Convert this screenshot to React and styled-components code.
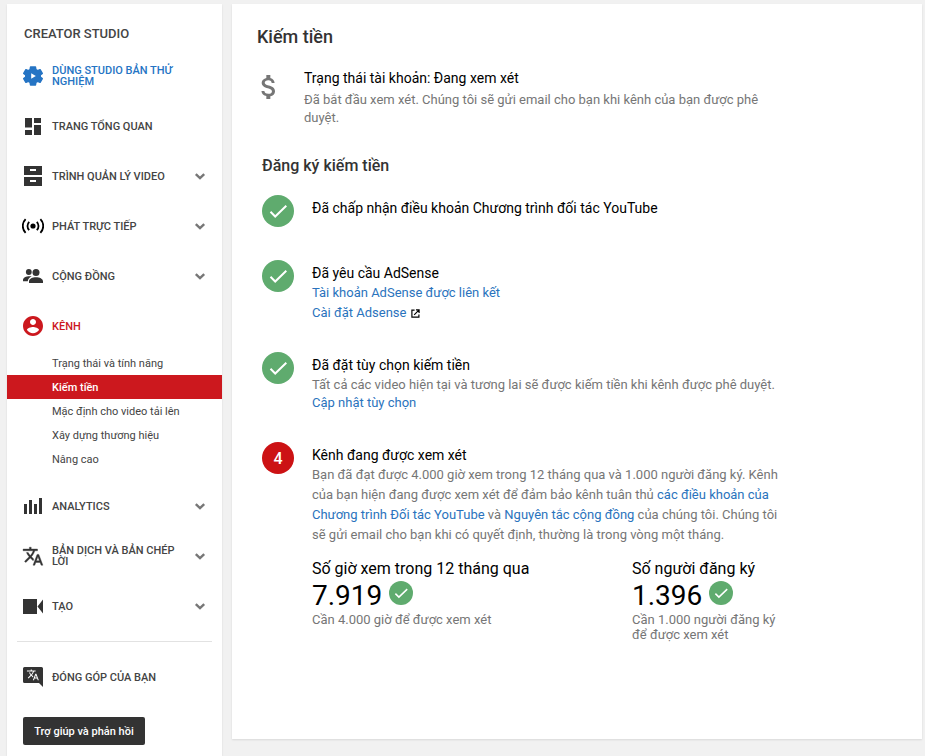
import React from "react";
import styled, { createGlobalStyle } from "styled-components";

const translatePath =
  "M12.87 15.07l-2.54-2.51.03-.03c1.74-1.94 2.98-4.17 3.71-6.53H17V4h-7V2H8v2H1v1.99h11.17C11.5 7.92 10.44 9.75 9 11.35 8.07 10.32 7.3 9.19 6.69 8h-2c.73 1.63 1.73 3.17 2.98 4.56l-5.09 5.02L4 19l5-5 3.11 3.11.76-2.04zM18.5 10h-2L12 22h2l1.12-3h4.75L21 22h2l-4.5-12zm-2.62 7l1.62-4.33L19.12 17h-3.24z";

const icons = {
  studio: (
    <svg viewBox="0 0 22 22">
      <path
        d="M8.500 2h5l.4 2.600 1.700 1 2.500-1 2.200 3.800-2 1.600v2l2 1.600-2.200 3.800-2.500-1-1.700 1-.4 2.600h-5l-.4-2.600-1.700-1-2.500 1-2.200-3.800 2-1.600v-2l-2-1.600 2.200-3.800 2.500 1 1.700-1z"
        stroke="#2574c4"
        strokeWidth="1.400"
        strokeLinejoin="round"
      />
      <path fill="#fff" d="M9.200 8.200l4.600 2.800-4.600 2.800z" />
    </svg>
  ),
  dashboard: (
    <svg viewBox="0 0 22 22">
      <path d="M3 3h7v9.5H3zM12 3h7v5h-7zM12 10h7v10h-7zM3 15h7v5H3z" />
    </svg>
  ),
  videos: (
    <svg viewBox="0 0 22 22">
      <path
        fillRule="evenodd"
        d="M2 1h18v9H2zM8 4v2h6V4zM2 12h18v9H2zM8 15v2h6v-2z"
      />
    </svg>
  ),
  live: (
    <svg viewBox="0 0 22 22" fill="none" stroke="#000" strokeWidth="1.8">
      <circle cx="11" cy="11" r="2.6" fill="#000" stroke="none" />
      <path d="M7.2 6.8a6 6 0 0 0 0 8.400M14.800 6.800a6 6 0 0 1 0 8.400M3.600 4.200a9.600 9.600 0 0 0 0 13.600M18.400 4.200a9.600 9.600 0 0 1 0 13.600" />
    </svg>
  ),
  community: (
    <svg viewBox="0 0 22 22">
      <circle cx="6.8" cy="7" r="2.9" />
      <circle cx="14" cy="7.5" r="3.5" />
      <path d="M7 17.9v-1.6c0-2.6 3.6-4.1 7-4.1s7 1.5 7 4.1v1.6zM1 16.3v-1.4c0-2.3 3.2-3.9 7.4-3.7.5 0 .9.1 1.2.2-2.2 1-3.7 2.6-3.8 4.9z" />
    </svg>
  ),
  channel: (
    <svg viewBox="1 1 22 22">
      <path d="M12 2C6.48 2 2 6.48 2 12s4.48 10 10 10 10-4.48 10-10S17.52 2 12 2zm0 3c1.66 0 3 1.34 3 3s-1.34 3-3 3-3-1.34-3-3 1.34-3 3-3zm0 14.2c-2.5 0-4.71-1.28-6-3.22.03-1.99 4-3.08 6-3.08 1.99 0 5.97 1.09 6 3.08-1.29 1.94-3.5 3.22-6 3.22z" />
    </svg>
  ),
  analytics: (
    <svg viewBox="0 0 22 22">
      <path d="M2 9h3v10H2zM7 5h3v14H7zM12 9h3v10h-3zM17 3h3v16h-3z" />
    </svg>
  ),
  translate: (
    <svg viewBox="0 0 22 22">
      <g transform="translate(.2 .4) scale(.9)">
        <path d={translatePath} stroke="#333" strokeWidth=".4" />
      </g>
    </svg>
  ),
  create: (
    <svg viewBox="0 0 22 22">
      <path d="M1 4h14v15H1zM21 4.5v14l-5.5-7z" />
    </svg>
  ),
  contribute: (
    <svg viewBox="0 0 22 22">
      <path d="M2.5 1h17A1.5 1.5 0 0 1 21 2.5V21l-4-4H2.5A1.5 1.5 0 0 1 1 15.5v-13A1.5 1.5 0 0 1 2.5 1z" />
      <g fill="#fff" transform="translate(4.4 2.3) scale(.54)">
        <path d={translatePath} />
      </g>
    </svg>
  ),
};

const menuTop = [
  { icon: "studio", label: ["DÙNG STUDIO BẢN THỬ", "NGHIỆM"], color: "#2574c4" },
  { icon: "dashboard", label: ["TRANG TỔNG QUAN"] },
  { icon: "videos", label: ["TRÌNH QUẢN LÝ VIDEO"], open: true },
  { icon: "live", label: ["PHÁT TRỰC TIẾP"], open: true },
  { icon: "community", label: ["CỘNG ĐỒNG"], open: true },
  { icon: "channel", label: ["KÊNH"], color: "#cc181e" },
];

const subMenu = [
  "Trạng thái và tính năng",
  "Kiếm tiền",
  "Mặc định cho video tải lên",
  "Xây dựng thương hiệu",
  "Nâng cao",
];

const menuBottom = [
  { icon: "analytics", label: ["ANALYTICS"], open: true },
  { icon: "translate", label: ["BẢN DỊCH VÀ BẢN CHÉP", "LỜI"], open: true },
  { icon: "create", label: ["TẠO"], open: true },
];

const stats = [
  {
    name: "Số giờ xem trong 12 tháng qua",
    value: "7.919",
    note: ["Cần 4.000 giờ để được xem xét"],
  },
  {
    name: "Số người đăng ký",
    value: "1.396",
    note: ["Cần 1.000 người đăng ký", "để được xem xét"],
  },
];

const MenuRow = ({ icon, label, color, open }) => (
  <Item $color={color}>
    <IconBox>{icons[icon]}</IconBox>
    <Label>
      {label.map((line) => (
        <div key={line}>{line}</div>
      ))}
    </Label>
    {open && (
      <Chevron viewBox="0 0 12 12">
        <path d="M1.800 4.200L6 8.200l4.200-4" />
      </Chevron>
    )}
  </Item>
);

const Check = ({ size = 32 }) => (
  <Circle $size={size}>
    <svg viewBox="0 0 32 32" width={size} height={size}>
      <path
        d="M8.500 16.800l4.700 4.700L24.300 10.800"
        fill="none"
        stroke="#fff"
        strokeWidth="2"
      />
    </svg>
  </Circle>
);

const App = () => {
  return (
    <Page>
      <GlobalStyle />
      <Sidebar>
        <Brand>CREATOR STUDIO</Brand>
        {menuTop.map((props) => (
          <MenuRow key={props.icon} {...props} />
        ))}
        <SubList>
          {subMenu.map((name) => (
            <SubItem key={name} $active={name === "Kiếm tiền"}>
              {name}
            </SubItem>
          ))}
        </SubList>
        {menuBottom.map((props) => (
          <MenuRow key={props.icon} {...props} />
        ))}
        <Divider />
        <MenuRow icon="contribute" label={["ĐÓNG GÓP CỦA BẠN"]} />
        <HelpButton>Trợ giúp và phản hồi</HelpButton>
      </Sidebar>

      <Main>
        <Title>Kiếm tiền</Title>
        <Status>
          <Dollar viewBox="0 0 24 24">
            <path d="M11.8 10.9c-2.27-.59-3-1.2-3-2.15 0-1.09 1.01-1.85 2.7-1.85 1.78 0 2.44.85 2.5 2.1h2.21c-.07-1.72-1.12-3.3-3.21-3.81V3h-3v2.16c-1.94.42-3.5 1.68-3.5 3.61 0 2.31 1.91 3.46 4.7 4.13 2.5.6 3 1.48 3 2.41 0 .69-.49 1.79-2.7 1.79-2.06 0-2.87-.92-2.98-2.1h-2.2c.12 2.19 1.76 3.42 3.68 3.83V21h3v-2.15c1.95-.37 3.5-1.5 3.5-3.55 0-2.84-2.43-3.81-4.7-4.4z" />
          </Dollar>
          <div>
            <StepTitle>Trạng thái tài khoản: Đang xem xét</StepTitle>
            <StatusText>
              Đã bắt đầu xem xét. Chúng tôi sẽ gửi email cho bạn khi kênh của
              bạn được phê
              <br />
              duyệt.
            </StatusText>
          </div>
        </Status>

        <SubTitle>Đăng ký kiếm tiền</SubTitle>

        <Step $height={65}>
          <Check />
          <StepBody>
            <StepTitle>
              Đã chấp nhận điều khoản Chương trình đối tác YouTube
            </StepTitle>
          </StepBody>
        </Step>
        <Step $height={92}>
          <Check />
          <StepBody>
            <StepTitle>Đã yêu cầu AdSense</StepTitle>
            <Text>
              <Link>Tài khoản AdSense được liên kết</Link>
            </Text>
            <Text>
              <Link>Cài đặt Adsense</Link>
              <External viewBox="0 0 10 10">
                <path d="M4 1.2H1v7.8h7.800V6M5.500 1H9v3.500M9 1L3.500 6.500" />
              </External>
            </Text>
          </StepBody>
        </Step>
        <Step $height={90}>
          <Check />
          <StepBody>
            <StepTitle>Đã đặt tùy chọn kiếm tiền</StepTitle>
            <Text $line={19}>
              Tất cả các video hiện tại và tương lai sẽ được kiếm tiền khi kênh
              được phê duyệt.
            </Text>
            <Text $line={18}>
              <Link>Cập nhật tùy chọn</Link>
            </Text>
          </StepBody>
        </Step>
        <Step>
          <Circle $size={32} $red>
            4
          </Circle>
          <StepBody>
            <StepTitle>Kênh đang được xem xét</StepTitle>
            <Text>
              Bạn đã đạt được 4.000 giờ xem trong 12 tháng qua và 1.000 người
              đăng ký. Kênh
              <br />
              của bạn hiện đang được xem xét để đảm bảo kênh tuân thủ{" "}
              <Link>các điều khoản của</Link>
              <br />
              <Link>Chương trình Đối tác YouTube</Link> và{" "}
              <Link>Nguyên tắc cộng đồng</Link> của chúng tôi. Chúng tôi
              <br />
              sẽ gửi email cho bạn khi có quyết định, thường là trong vòng một
              tháng.
            </Text>
            <Stats>
              {stats.map((props) => (
                <div key={props.name}>
                  <StatName>{props.name}</StatName>
                  <StatValue>
                    {props.value}
                    <Check size={24} />
                  </StatValue>
                  {props.note.map((line) => (
                    <Text key={line} $line={15}>
                      {line}
                    </Text>
                  ))}
                </div>
              ))}
            </Stats>
          </StepBody>
        </Step>
      </Main>
    </Page>
  );
};

export default App;

const GlobalStyle = createGlobalStyle`
  * {
    box-sizing: border-box;
  }
  body {
    margin: 0;
    background: #f1f1f1;
    font-family: Roboto, "Liberation Sans", sans-serif;
  }
`;
const Page = styled.div`
  display: flex;
  gap: 10px;
  height: 756px;
  padding: 4px 3px 0 7px;
  overflow: hidden;
  white-space: nowrap;
`;
const Sidebar = styled.nav`
  width: 215px;
  flex-shrink: 0;
  background: #fff;
  box-shadow: 0 1px 2px rgba(0, 0, 0, 0.1);
`;
const Brand = styled.div`
  height: 47px;
  padding: 20px 17px 0;
  font-size: 13px;
  line-height: 20px;
  font-weight: 500;
  letter-spacing: -0.02px;
  color: #444;
`;
const Item = styled.div`
  display: flex;
  align-items: center;
  height: 50px;
  padding: 0 16px 0 15px;
  color: ${({ $color }) => $color || "#444"};
  fill: ${({ $color }) => $color || "#333"};
`;
const IconBox = styled.div`
  width: 22px;
  height: 22px;
  margin-right: 8px;

  svg {
    display: block;
    width: 22px;
    height: 22px;
  }
`;
const Label = styled.div`
  flex: 1;
  font-size: 11px;
  line-height: 11px;
  font-weight: 500;
`;
const Chevron = styled.svg`
  width: 12px;
  height: 12px;
  fill: none;
  stroke: #777;
  stroke-width: 2.4;
`;
const SubList = styled.div`
  padding-bottom: 10px;
`;
const SubItem = styled.div`
  height: 24px;
  padding: 1px 0 0 45px;
  font-size: 11px;
  line-height: 23px;
  font-weight: ${({ $active }) => ($active ? 500 : 400)};
  color: ${({ $active }) => ($active ? "#fff" : "#444")};
  background: ${({ $active }) => ($active ? "#cc181e" : "none")};
`;
const Divider = styled.div`
  height: 1px;
  margin: 10px 10px;
  background: #e2e2e2;
`;
const HelpButton = styled.button`
  display: block;
  width: 122px;
  height: 28px;
  margin: 15px 0 0 16px;
  padding: 0;
  border: none;
  border-radius: 2px;
  background: #333;
  color: #fff;
  font-family: inherit;
  font-size: 11px;
  font-weight: 500;
`;
const Main = styled.main`
  width: 690px;
  height: 735px;
  flex-shrink: 0;
  padding: 21px 25px;
  background: #fff;
  box-shadow: 0 1px 2px rgba(0, 0, 0, 0.1);
`;
const Title = styled.h1`
  margin: 0;
  font-size: 18px;
  line-height: 24px;
  font-weight: 500;
  color: #333;
`;
const Status = styled.div`
  display: flex;
  height: 87px;
  padding-top: 20px;
`;
const Dollar = styled.svg`
  width: 32px;
  height: 32px;
  margin: 2px 19px 0 -4px;
  fill: #767676;
`;
const SubTitle = styled.h2`
  margin: 20px 0 19px 5px;
  font-size: 16px;
  line-height: 20px;
  font-weight: 500;
  color: #333;
`;
const Step = styled.div`
  display: flex;
  gap: 18px;
  height: ${({ $height }) => ($height ? $height + "px" : "auto")};
  padding-left: 5px;
`;
const StepBody = styled.div`
  padding-top: 4px;
`;
const StepTitle = styled.div`
  font-size: 14px;
  line-height: 19px;
  color: #000;
`;
const Text = styled.div`
  font-size: 13px;
  line-height: ${({ $line }) => $line || 20}px;
  color: #767676;
`;
const StatusText = styled(Text)`
  padding-top: 3px;
  line-height: 18px;
`;
const Link = styled.a`
  color: #2a73bd;
`;
const External = styled.svg`
  width: 9px;
  height: 9px;
  margin-left: 5px;
  vertical-align: -1px;
  fill: none;
  stroke: #000;
  stroke-width: 1.3;
`;
const Circle = styled.div`
  display: flex;
  align-items: center;
  justify-content: center;
  flex-shrink: 0;
  width: ${({ $size }) => $size}px;
  height: ${({ $size }) => $size}px;
  border-radius: 50%;
  background: ${({ $red }) => ($red ? "#cc1214" : "#5fab6e")};
  color: #fff;
  font-size: 16px;
  font-weight: 500;
`;
const Stats = styled.div`
  display: grid;
  grid-template-columns: 320px 160px;
  padding-top: 14px;
`;
const StatName = styled.div`
  font-size: 16px;
  line-height: 19px;
  color: #000;
`;
const StatValue = styled.div`
  display: flex;
  gap: 7px;
  height: 34px;
  font-size: 28px;
  line-height: 36px;
  color: #000;

  ${Circle} {
    margin-top: 3px;
  }
`;
